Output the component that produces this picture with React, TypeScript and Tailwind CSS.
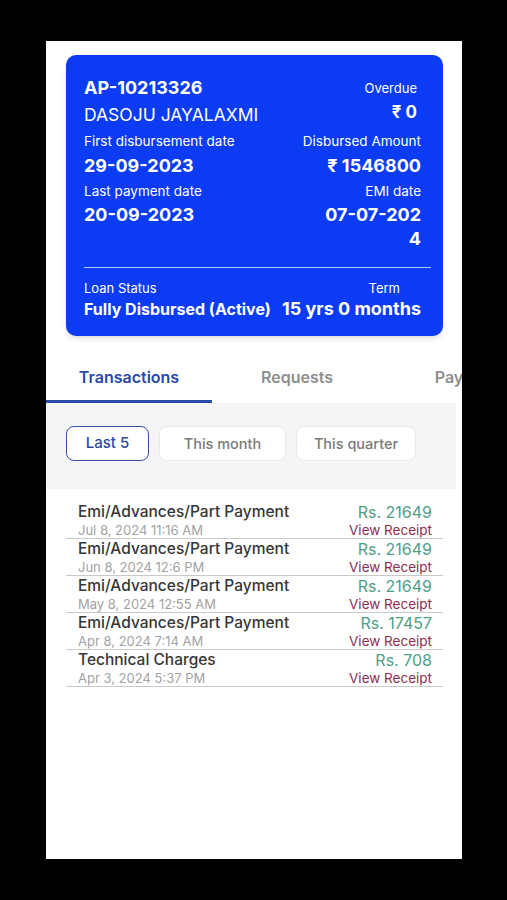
import React from "react";

const txns = [
  { title: "Emi/Advances/Part Payment", date: "Jul 8, 2024 11:16 AM", amount: "Rs. 21649" },
  { title: "Emi/Advances/Part Payment", date: "Jun 8, 2024 12:6 PM", amount: "Rs. 21649" },
  { title: "Emi/Advances/Part Payment", date: "May 8, 2024 12:55 AM", amount: "Rs. 21649" },
  { title: "Emi/Advances/Part Payment", date: "Apr 8, 2024 7:14 AM", amount: "Rs. 17457" },
  { title: "Technical Charges", date: "Apr 3, 2024 5:37 PM", amount: "Rs. 708" },
];

const LoanCard = () => {
  return (
    <div className="mx-[20px] mt-[14px] w-[377px] rounded-[10px] bg-[#0b3cf3] pt-[20px] pb-[16px] pl-[18px] pr-[12px] text-white shadow-md">
      <div className="pr-[10px]">
        <div className="flex justify-between">
          <div>
            <p className="text-[18px] font-bold leading-[26px]">AP-10213326</p>
            <p className="text-[17.5px] leading-[28px]">DASOJU JAYALAXMI</p>
          </div>
          <div className="pr-[4px] text-right">
            <p className="text-[13px] leading-[26px]">Overdue</p>
            <p className="text-[17px] font-bold leading-[22px]">₹ 0</p>
          </div>
        </div>
        <div className="flex justify-between">
          <div>
            <p className="text-[13.5px] leading-[24px]">First disbursement date</p>
            <p className="text-[18px] font-bold leading-[26px]">29-09-2023</p>
          </div>
          <div className="text-right">
            <p className="text-[13.5px] leading-[24px]">Disbursed Amount</p>
            <p className="text-[18px] font-bold leading-[26px]">₹ 1546800</p>
          </div>
        </div>
        <div className="flex justify-between">
          <div>
            <p className="text-[13.5px] leading-[24px]">Last payment date</p>
            <p className="text-[18px] font-bold leading-[24px]">20-09-2023</p>
          </div>
          <div className="flex flex-col items-end text-right">
            <p className="text-[13.5px] leading-[24px]">EMI date</p>
            <p className="w-[98px] break-all text-[18px] font-bold leading-[24px]">07-07-2024</p>
          </div>
        </div>
      </div>
      <div className="mt-[16px] h-px bg-white/70" />
      <div className="mt-[10px] flex justify-between pr-[10px]">
        <div>
          <p className="text-[13px] leading-[20px]">Loan Status</p>
          <p className="text-[16px] font-bold leading-[22px]">Fully Disbursed (Active)</p>
        </div>
        <div className="text-right">
          <p className="pr-[21px] text-[13px] leading-[20px]">Term</p>
          <p className="text-[18px] font-bold leading-[22px]">15 yrs 0 months</p>
        </div>
      </div>
    </div>
  );
};

export default function App() {
  return (
    <div
      className="h-[900px] w-full bg-black pt-[41px]"
      style={{ fontFamily: "Inter, 'Noto Sans', sans-serif" }}
    >
      <div className="ml-[46px] h-[818px] w-[416px] overflow-hidden bg-white">
        <LoanCard />

        <div className="mt-[17px] flex overflow-hidden">
          <div className="flex h-[50px] w-[166px] shrink-0 items-center justify-center border-b-[3px] border-[#2b4aa8] text-[16px] font-semibold text-[#2a48a6]">
            Transactions
          </div>
          <div className="flex h-[50px] w-[170px] shrink-0 items-center justify-center pb-[3px] text-[16px] font-semibold text-[#8e8e8e]">
            Requests
          </div>
          <div className="flex h-[50px] w-[182px] shrink-0 items-center justify-center pb-[3px] text-[16px] font-semibold text-[#8e8e8e]">
            Payments
          </div>
        </div>

        <div className="mr-[6px] flex gap-[10px] bg-[#f4f5f7] pt-[23px] pb-[28px] pl-[20px]">
          <div className="flex h-[35px] w-[83px] items-center justify-center rounded-[8px] border border-[#34509f] bg-white text-[15px] font-medium text-[#2c4a9c]">
            Last 5
          </div>
          <div className="flex h-[35px] w-[127px] items-center justify-center rounded-[8px] border border-[#e9e9eb] bg-white text-[14.5px] font-medium text-[#7a7a7a]">
            This month
          </div>
          <div className="flex h-[35px] w-[120px] items-center justify-center rounded-[8px] border border-[#e9e9eb] bg-white text-[14.5px] font-medium text-[#7a7a7a]">
            This quarter
          </div>
        </div>

        <div className="mx-[20px] mt-[13px] w-[377px]">
          {txns.map((t, i) => (
            <div key={i} className="flex justify-between border-b border-[#c9c9c9] pl-[12px] pr-[11px]">
              <div>
                <p className="text-[15.5px] font-medium leading-[20px] text-[#363636]">{t.title}</p>
                <p className="text-[13px] leading-[16px] text-[#a3a3a3]">{t.date}</p>
              </div>
              <div className="text-right">
                <p className="text-[16px] leading-[20px] text-[#4f9e86]">{t.amount}</p>
                <p className="text-[13.5px] leading-[16px] text-[#8c2d55]">View Receipt</p>
              </div>
            </div>
          ))}
        </div>
      </div>
    </div>
  );
}
